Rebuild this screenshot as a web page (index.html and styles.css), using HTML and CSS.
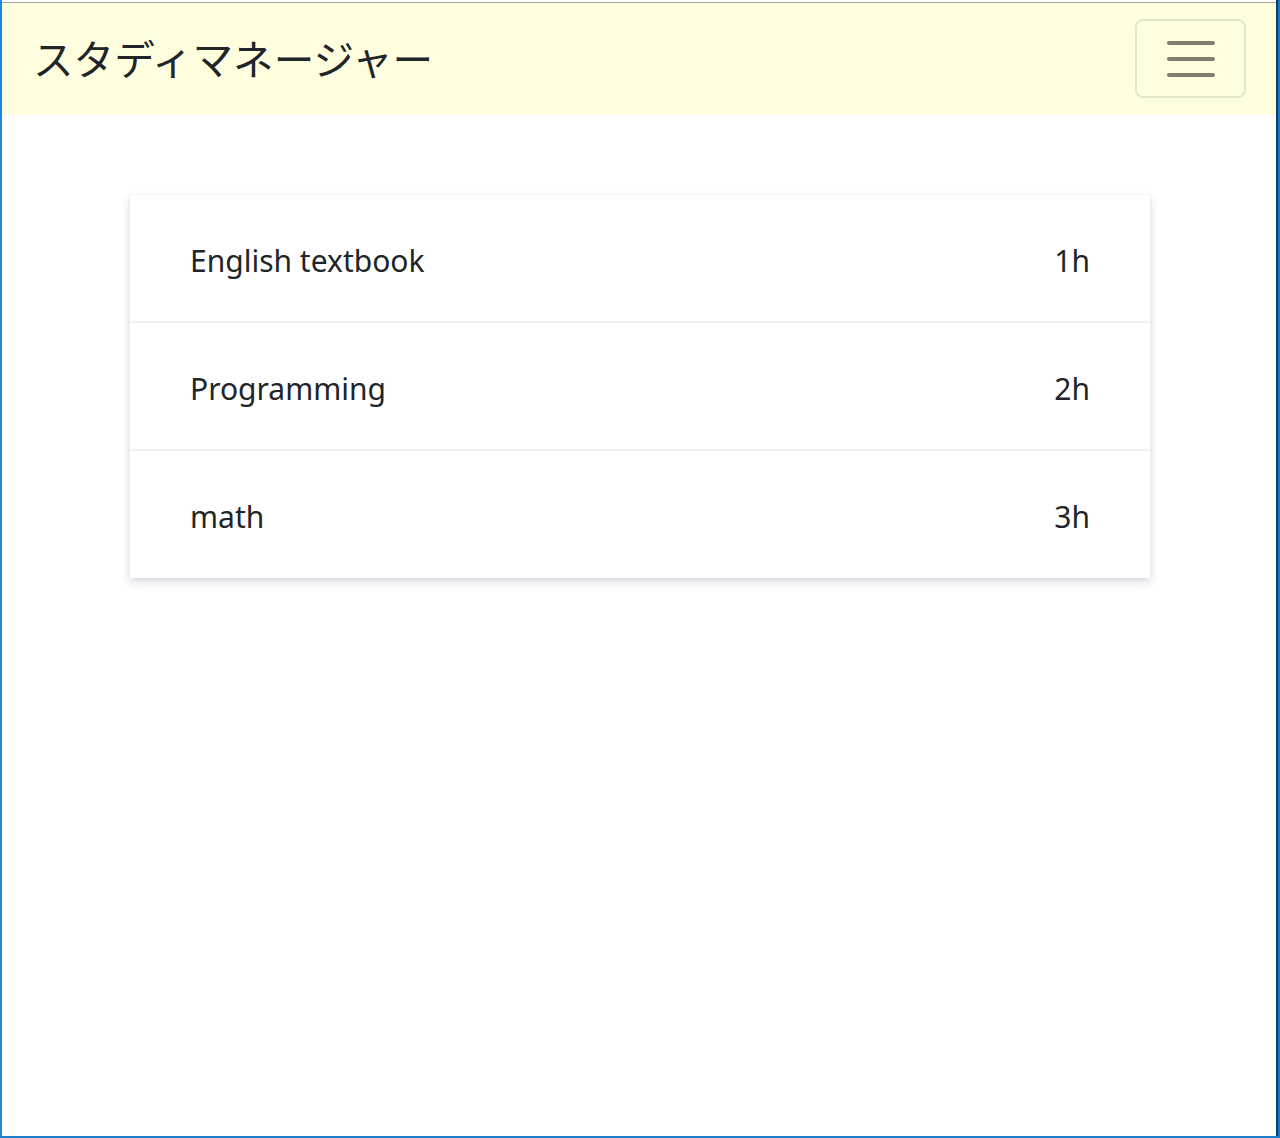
FILE: index.html
```html
<!DOCTYPE html>
<html lang="ja">
<head>
<meta charset="utf-8">
<title>スタディマネージャー</title>
<link rel="stylesheet" href="styles.css">
</head>
<body>
<div class="window">
  <nav class="navbar">
    <span class="brand">スタディマネージャー</span>
    <button class="toggler" aria-label="menu">
      <span class="bar"></span><span class="bar"></span><span class="bar"></span>
    </button>
  </nav>
  <main class="content">
    <ul class="list">
      <li class="item"><span>English textbook</span><span>1h</span></li>
      <li class="item"><span>Programming</span><span>2h</span></li>
      <li class="item"><span>math</span><span>3h</span></li>
    </ul>
  </main>
</div>
</body>
</html>
```

FILE: styles.css
```css
html, body {
  margin: 0;
  padding: 0;
  background: #ffffff;
}
.window {
  box-sizing: border-box;
  height: 1138px;
  padding-top: 2px;
  border-left: 2px solid #1f86d8;
  border-right: 2px solid #1a78c8;
  border-bottom: 2px solid #1f7fcf;
  box-shadow: inset -2px 0 0 #0e3a66;
  font-family: "Noto Sans", "Open Sans", sans-serif;
  color: #212529;
}
.navbar {
  box-sizing: border-box;
  height: 113px;
  border-top: 1px solid #a6a6a6;
  margin-right: 2px;
  background: #ffffe0;
  display: flex;
  align-items: center;
  justify-content: space-between;
  padding: 0 30px 0 31px;
}
.brand {
  font-family: "Noto Sans CJK JP", sans-serif;
  font-size: 40.6px;
  line-height: 1;
  color: #212529;
  margin-top: -2px;
}
.toggler {
  box-sizing: border-box;
  width: 111px;
  height: 79px;
  margin-top: -1px;
  border: 2px solid rgba(0, 0, 0, 0.1);
  border-radius: 8px;
  background: transparent;
  display: flex;
  flex-direction: column;
  align-items: center;
  justify-content: center;
  gap: 12px;
  padding: 0;
}
.bar {
  display: block;
  width: 48px;
  height: 4px;
  border-radius: 2px;
  background: #7f7e6f;
}
.content {
  padding-top: 80px;
  display: flex;
  justify-content: center;
}
.list {
  list-style: none;
  margin: 0;
  padding: 0;
  width: 1020px;
  background: #fff;
  box-shadow: 0 4px 9px rgba(30, 50, 90, 0.18), 0 0 2px rgba(30, 50, 90, 0.07);
}
.item {
  box-sizing: border-box;
  height: 128px;
  display: flex;
  align-items: center;
  justify-content: space-between;
  padding: 4px 60px 0 60px;
  font-size: 30px;
  border-bottom: 2px solid #f0f1f3;
}
.item:last-child {
  border-bottom: none;
  height: 127px;
}
```
